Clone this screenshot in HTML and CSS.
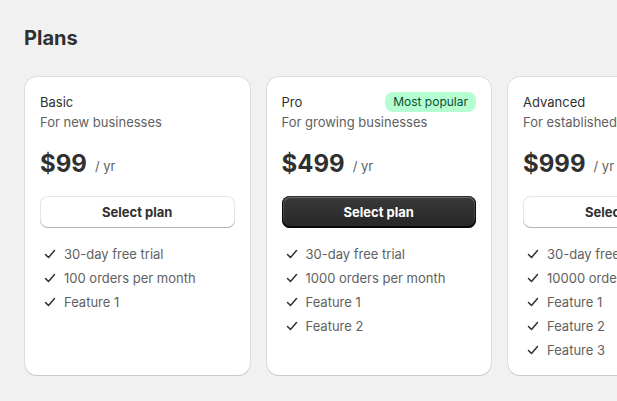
FILE: index.html
```html
<!DOCTYPE html>
<html lang="en">
<head>
    <meta charset="UTF-8">
    <meta name="viewport" content="width=device-width, initial-scale=1.0">
    <title>Plans</title>
    <link rel="stylesheet" href="styles.css">
</head>
<body>
    <div class="page">
        <h1 class="page-title">Plans</h1>

        <div class="plans">
            <div class="plan-card">
                <div class="plan-head">
                    <span class="plan-name">Basic</span>
                </div>
                <p class="plan-desc">For new businesses</p>
                <div class="plan-price">
                    <span class="amount">$99</span>
                    <span class="period">/ yr</span>
                </div>
                <button class="button">Select plan</button>
                <ul class="features">
                    <li><svg class="check" viewBox="0 0 20 20"><path d="M5.5 10.5l3 3 6-7"/></svg>30-day free trial</li>
                    <li><svg class="check" viewBox="0 0 20 20"><path d="M5.5 10.5l3 3 6-7"/></svg>100 orders per month</li>
                    <li><svg class="check" viewBox="0 0 20 20"><path d="M5.5 10.5l3 3 6-7"/></svg>Feature 1</li>
                </ul>
            </div>

            <div class="plan-card">
                <div class="plan-head">
                    <span class="plan-name">Pro</span>
                    <span class="badge">Most popular</span>
                </div>
                <p class="plan-desc">For growing businesses</p>
                <div class="plan-price">
                    <span class="amount">$499</span>
                    <span class="period">/ yr</span>
                </div>
                <button class="button button-primary">Select plan</button>
                <ul class="features">
                    <li><svg class="check" viewBox="0 0 20 20"><path d="M5.5 10.5l3 3 6-7"/></svg>30-day free trial</li>
                    <li><svg class="check" viewBox="0 0 20 20"><path d="M5.5 10.5l3 3 6-7"/></svg>1000 orders per month</li>
                    <li><svg class="check" viewBox="0 0 20 20"><path d="M5.5 10.5l3 3 6-7"/></svg>Feature 1</li>
                    <li><svg class="check" viewBox="0 0 20 20"><path d="M5.5 10.5l3 3 6-7"/></svg>Feature 2</li>
                </ul>
            </div>

            <div class="plan-card">
                <div class="plan-head">
                    <span class="plan-name">Advanced</span>
                </div>
                <p class="plan-desc">For established businesses</p>
                <div class="plan-price">
                    <span class="amount">$999</span>
                    <span class="period">/ yr</span>
                </div>
                <button class="button">Select plan</button>
                <ul class="features">
                    <li><svg class="check" viewBox="0 0 20 20"><path d="M5.5 10.5l3 3 6-7"/></svg>30-day free trial</li>
                    <li><svg class="check" viewBox="0 0 20 20"><path d="M5.5 10.5l3 3 6-7"/></svg>10000 orders per month</li>
                    <li><svg class="check" viewBox="0 0 20 20"><path d="M5.5 10.5l3 3 6-7"/></svg>Feature 1</li>
                    <li><svg class="check" viewBox="0 0 20 20"><path d="M5.5 10.5l3 3 6-7"/></svg>Feature 2</li>
                    <li><svg class="check" viewBox="0 0 20 20"><path d="M5.5 10.5l3 3 6-7"/></svg>Feature 3</li>
                </ul>
            </div>
        </div>
    </div>
</body>
</html>
```

FILE: styles.css
```css
* {
    margin: 0;
    padding: 0;
    box-sizing: border-box;
}

body {
    font-family: Inter, 'Noto Sans', sans-serif;
    font-size: 13px;
    line-height: 20px;
    color: #303030;
    background-color: #f1f1f1;
    overflow: hidden;
}

.page {
    padding: 26px 24px 26px 25px;
}

.page-title {
    font-size: 20px;
    line-height: 24px;
    font-weight: 650;
    color: #303030;
    margin-bottom: 27px;
    margin-left: -1px;
}

.plans {
    display: grid;
    grid-template-columns: repeat(3, 224.5px);
    gap: 17px;
}

.plan-card {
    background-color: #fff;
    border-radius: 12px;
    padding: 15px 15px 15px;
    box-shadow: 0 0 0 1px rgba(0, 0, 0, 0.08), 0 1px 1px rgba(0, 0, 0, 0.1);
    display: flex;
    flex-direction: column;
}

.plan-head {
    display: flex;
    justify-content: space-between;
    align-items: center;
    height: 20px;
}

.plan-name {
    font-size: 13px;
    color: #303030;
}

.badge {
    background-color: #b4fed2;
    color: #0c5132;
    font-size: 12px;
    line-height: 20px;
    padding: 0 8px;
    border-radius: 8px;
}

.plan-desc {
    color: #616161;
    white-space: nowrap;
}

.plan-price {
    display: flex;
    align-items: baseline;
    gap: 8px;
    margin-top: 16px;
}

.amount {
    font-size: 24px;
    line-height: 32px;
    font-weight: 700;
    color: #303030;
}

.period {
    color: #616161;
    position: relative;
    top: -1px;
}

.button {
    margin-top: 16px;
    height: 32px;
    border: none;
    border-radius: 8px;
    background-color: #fff;
    font-family: inherit;
    font-size: 13px;
    font-weight: 650;
    color: #303030;
    box-shadow: inset 0 -1px 0 0 #b5b5b5, inset 0 0 0 1px rgba(0, 0, 0, 0.1), inset 0 0.5px 0 1.5px #fff;
    cursor: pointer;
}

.button-primary {
    background: linear-gradient(180deg, #3a3a3a 0%, #262626 100%);
    color: #fff;
    box-shadow: inset 0 -1px 0 1px rgba(0, 0, 0, 0.8), inset 0 0 0 1px #303030, inset 0 0.5px 0 1.5px rgba(255, 255, 255, 0.25);
}

.features {
    list-style: none;
    margin-top: 16px;
    display: flex;
    flex-direction: column;
    gap: 4px;
}

.features li {
    display: flex;
    align-items: center;
    gap: 4px;
    color: #616161;
    white-space: nowrap;
}

.check {
    width: 20px;
    height: 20px;
    flex-shrink: 0;
    fill: none;
    stroke: #303030;
    stroke-width: 1.5;
    stroke-linecap: round;
    stroke-linejoin: round;
}
```
